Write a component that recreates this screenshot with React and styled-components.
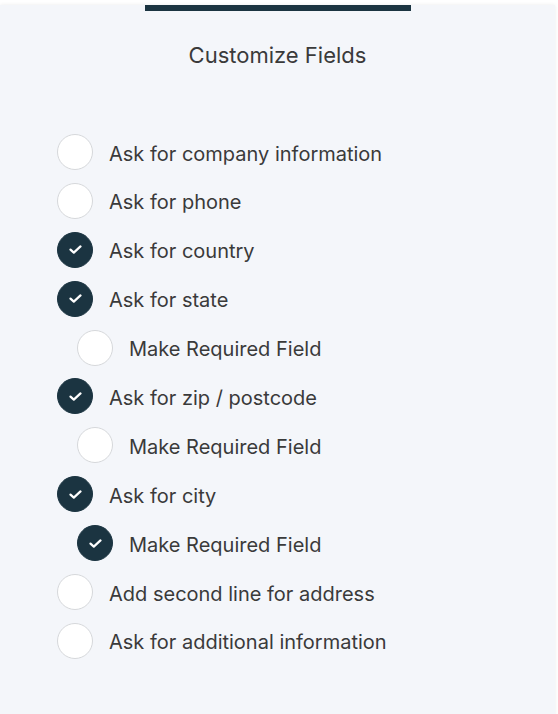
import React from 'react';
import styled, { createGlobalStyle } from 'styled-components';

const GlobalStyle = createGlobalStyle`
    html, body {
        margin: 0;
        padding: 0;
        background: #ffffff;
    }
    body {
        font-family: Inter, "Liberation Sans", sans-serif;
        -webkit-font-smoothing: antialiased;
    }
`;

const Card = styled.div`
    margin: 5px 3px 0 0;
    height: 720px;
    background: #f4f6fa;
    box-shadow: 0 0 4px rgba(0, 0, 0, 0.08);
    display: flex;
    flex-direction: column;
    align-items: center;
`;

const TopBar = styled.div`
    width: 266px;
    height: 6px;
    background: #1b3441;
`;

const Title = styled.h2`
    margin: 30px 0 0;
    font-size: 22px;
    line-height: 28px;
    font-weight: 400;
    color: #3a3a3a;
`;

const List = styled.ul`
    list-style: none;
    margin: 65px 0 0;
    padding: 0 0 0 57px;
    align-self: stretch;
    display: flex;
    flex-direction: column;
    gap: 12.9px;
`;

const Row = styled.li`
    display: flex;
    align-items: center;
    gap: 16px;
    height: 36px;
    padding-left: ${p => (p.$nested ? '20px' : '0')};
`;

const Circle = styled.span`
    box-sizing: border-box;
    flex: none;
    width: 36px;
    height: 36px;
    border-radius: 50%;
    display: flex;
    align-items: center;
    justify-content: center;
    background: ${p => (p.$checked ? '#1b3441' : '#ffffff')};
    border: 1px solid ${p => (p.$checked ? '#1b3441' : '#d6d8db')};
`;

const Label = styled.span`
    padding-top: 3px;
    font-size: 20px;
    color: #3a3a3a;
`;

const fields = [
    { label: 'Ask for company information' },
    { label: 'Ask for phone' },
    { label: 'Ask for country', checked: true },
    { label: 'Ask for state', checked: true },
    { label: 'Make Required Field', nested: true },
    { label: 'Ask for zip / postcode', checked: true },
    { label: 'Make Required Field', nested: true },
    { label: 'Ask for city', checked: true },
    { label: 'Make Required Field', nested: true, checked: true },
    { label: 'Add second line for address' },
    { label: 'Ask for additional information' },
];

function Check() {
    return (
        <svg width="13" height="9" viewBox="0 0 13 9" fill="none">
            <path d="M1.5 4.6 L4.8 7.6 L11.5 1.4" stroke="#fff" strokeWidth="2.2" strokeLinecap="round" strokeLinejoin="round" />
        </svg>
    );
}

export default function App() {
    return (
        <>
            <GlobalStyle />
            <Card>
                <TopBar />
                <Title>Customize Fields</Title>
                <List>
                    {fields.map((f, i) => (
                        <Row key={i} $nested={f.nested}>
                            <Circle $checked={f.checked}>{f.checked && <Check />}</Circle>
                            <Label>{f.label}</Label>
                        </Row>
                    ))}
                </List>
            </Card>
        </>
    );
}
